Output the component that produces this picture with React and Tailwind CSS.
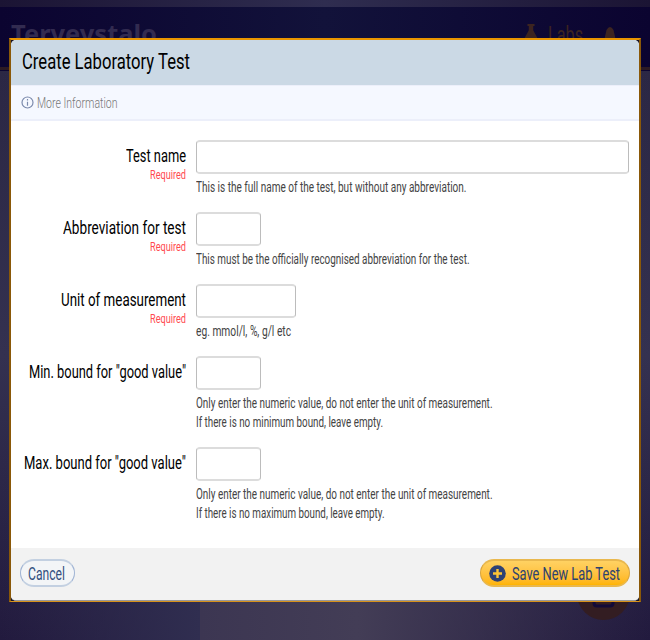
import { useLayoutEffect, useRef } from "react";

// Condensed line of text: keeps the full height of the face and fits the given width.
function Narrow({ w, className = "", children }) {
  const ref = useRef(null);
  useLayoutEffect(() => {
    const el = ref.current;
    el.style.transform = "none";
    el.style.transform = `scaleX(${w / el.getBoundingClientRect().width})`;
  }, [w]);
  return (
    <span className={`flex overflow-visible whitespace-nowrap ${className}`} style={{ width: w }}>
      <span ref={ref} className="inline-block shrink-0 origin-left">{children}</span>
    </span>
  );
}

const fields = [
  { label: "Test name", lw: 60, required: true, box: "w-[433px]", row: "h-[72px]", help: [["This is the full name of the test, but without any abbreviation.", 270.5]] },
  { label: "Abbreviation for test", lw: 123, required: true, box: "w-[65px]", row: "h-[72px]", help: [["This must be the officially recognised abbreviation for the test.", 273.5]] },
  { label: "Unit of measurement", lw: 125, required: true, box: "w-[100px]", row: "h-[72px]", help: [["eg. mmol/l, %, g/l etc", 95]] },
  { label: 'Min. bound for "good value"', lw: 157, box: "w-[65px]", row: "h-[91px]", help: [["Only enter the numeric value, do not enter the unit of measurement.", 296.5], ["If there is no minimum bound, leave empty.", 187]] },
  { label: 'Max. bound for "good value"', lw: 162, box: "w-[65px]", row: "h-[91px]", help: [["Only enter the numeric value, do not enter the unit of measurement.", 296.5], ["If there is no maximum bound, leave empty.", 188.5]] },
];

function Field({ label, lw, required, box, row, help }) {
  return (
    <div className={`flex gap-[10px] ${row}`}>
      <div className="flex w-[175px] flex-col items-end pt-[7px]">
        <Narrow w={lw} className="h-[20px] text-[19px] leading-[18px] text-black">{label}</Narrow>
        {required && <Narrow w={36} className="h-4 text-[13px] leading-4 text-[#ff4a50]">Required</Narrow>}
      </div>
      <div>
        <input aria-label={label} className={`block h-[34px] rounded-[4px] border-x border-y-2 border-x-[#bcbcbc] border-y-[#dcdcdc] bg-white outline-none ${box}`} />
        <div className="pt-[4px]">
          {help.map(([text, w]) => (
            <Narrow key={text} w={w} className="h-[19px] text-[15.5px] leading-[19px] text-[#444]">{text}</Narrow>
          ))}
        </div>
      </div>
    </div>
  );
}

export default function App() {
  return (
    <div className="relative h-[640px] w-[650px] overflow-hidden bg-[#2c2848] font-['Roboto','Liberation_Sans',sans-serif]">
      <div className="flex h-full flex-col">
        <div className="h-[7px] bg-linear-to-r from-[#1b1434] via-[#2f2d50] to-[#1b1434]" />
        <header className="flex h-[60px] justify-between bg-linear-to-r from-[#0b0430] via-[#12123a] to-[#0b0430] pt-[13px] pr-[33px] pl-[11px]">
          <Narrow w={146} className="font-['Noto_Sans',sans-serif] text-[25px] leading-[27px] font-bold text-[#322b50]">Terveystalo</Narrow>
          <div className="flex text-[#3c2420]">
            <svg className="mt-[3px] mr-[9px] h-[20px] w-[16px]" viewBox="0 0 18 20" fill="currentColor"><path d="M5 0h8v2h-1.500v5L18 19H0L6.500 7V2H5z" /></svg>
            <Narrow w={35} className="text-[24px] leading-[30px]">Labs</Narrow>
            <svg className="mt-[7px] ml-[20px] h-[20px] w-[14px]" viewBox="0 0 14 20" fill="currentColor"><path d="M1 14 3.500 3Q7-3 10.500 3L13 14z" /></svg>
          </div>
        </header>
        <div className="h-[3px] bg-[#2c1a24]" />
        <div className="h-px bg-[#0b0430]" />
        <main className="flex flex-1">
          <div className="w-[200px] bg-linear-to-b from-[#2b2744] via-[#343150] to-[#221a3e]">
            <div className="h-full bg-linear-to-r from-transparent to-[#302e50]" />
          </div>
          <div className="flex-1 bg-linear-to-b from-[#2b2744] via-[#343150] to-[#221a3e]">
            <div className="h-full bg-linear-to-r from-[#3c3652] via-[#433d56] via-35% to-transparent" />
          </div>
        </main>
      </div>

      <div className="absolute top-[567px] left-[577px] flex h-[53px] w-[53px] justify-center rounded-full bg-[#331d22] pt-[24px]">
        <svg className="h-[18px] w-[23px]" viewBox="0 0 23 18" fill="none" stroke="#120a38" strokeWidth="3"><path d="M2 2v10q0 3 3 3h13q3 0 3-3V2" /></svg>
      </div>

      <div className="absolute top-[38px] left-[9px] h-[564px] w-[632px] border-x-2 border-t-2 border-b border-x-[#8a5808] border-t-[#e99500] border-b-[#d8921a] bg-[#171528]">
        <section className="flex h-[561px] flex-col overflow-hidden rounded-[5px] border-b border-[#9a9a9a] bg-white">
          <h1 className="flex h-[45px] items-start bg-[#cbd9e5] pt-[7px] pl-[11px]">
            <Narrow w={168} className="text-[22px] leading-[30px] text-black">Create Laboratory Test</Narrow>
          </h1>
          <div className="flex h-[36px] items-center gap-[3px] border-t border-b-2 border-[#eceffa] bg-[#f5f8ff] pl-[10px]">
            <svg className="h-[13px] w-[13px]" viewBox="0 0 13 13" fill="none" stroke="#7b8aac" strokeWidth="1.2"><circle cx="6.500" cy="6.500" r="5.500" /><path d="M6.500 5.700v4M6.500 3v1.400" /></svg>
            <Narrow w={80.5} className="text-[15px] leading-[20px] font-light text-[#777]">More Information</Narrow>
          </div>
          <form className="flex-1 pt-[19px]">
            {fields.map((f) => <Field key={f.label} {...f} />)}
          </form>
          <footer className="flex h-[52px] items-start justify-between bg-[#f2f2f2] pt-[11px] pr-[9px] pl-[9px]">
            <button type="button" className="flex h-[28px] w-[55px] items-center rounded-full border-x border-y-2 border-x-[#a0b4d4] border-y-[#c3d0e1] bg-[#f3f5f7] pl-[7px] text-[19px] leading-none text-[#34507f]">
              <Narrow w={37}>Cancel</Narrow>
            </button>
            <button type="button" className="flex h-[28px] w-[150px] items-center gap-[6px] rounded-full border-x border-y-2 border-x-[#daa53c] border-y-[#e9b84e] bg-linear-to-b from-[#ffd262] to-[#ffb400] pl-[8px] text-[19px] leading-none text-[#2d426f]">
              <svg className="h-[17px] w-[17px]" viewBox="0 0 17 17"><circle cx="8.500" cy="8.500" r="8.300" fill="#2f4274" /><path d="M8.500 4v9M4 8.500h9" stroke="#ffc536" strokeWidth="2.400" /></svg>
              <Narrow w={108}>Save New Lab Test</Narrow>
            </button>
          </footer>
        </section>
      </div>
    </div>
  );
}
